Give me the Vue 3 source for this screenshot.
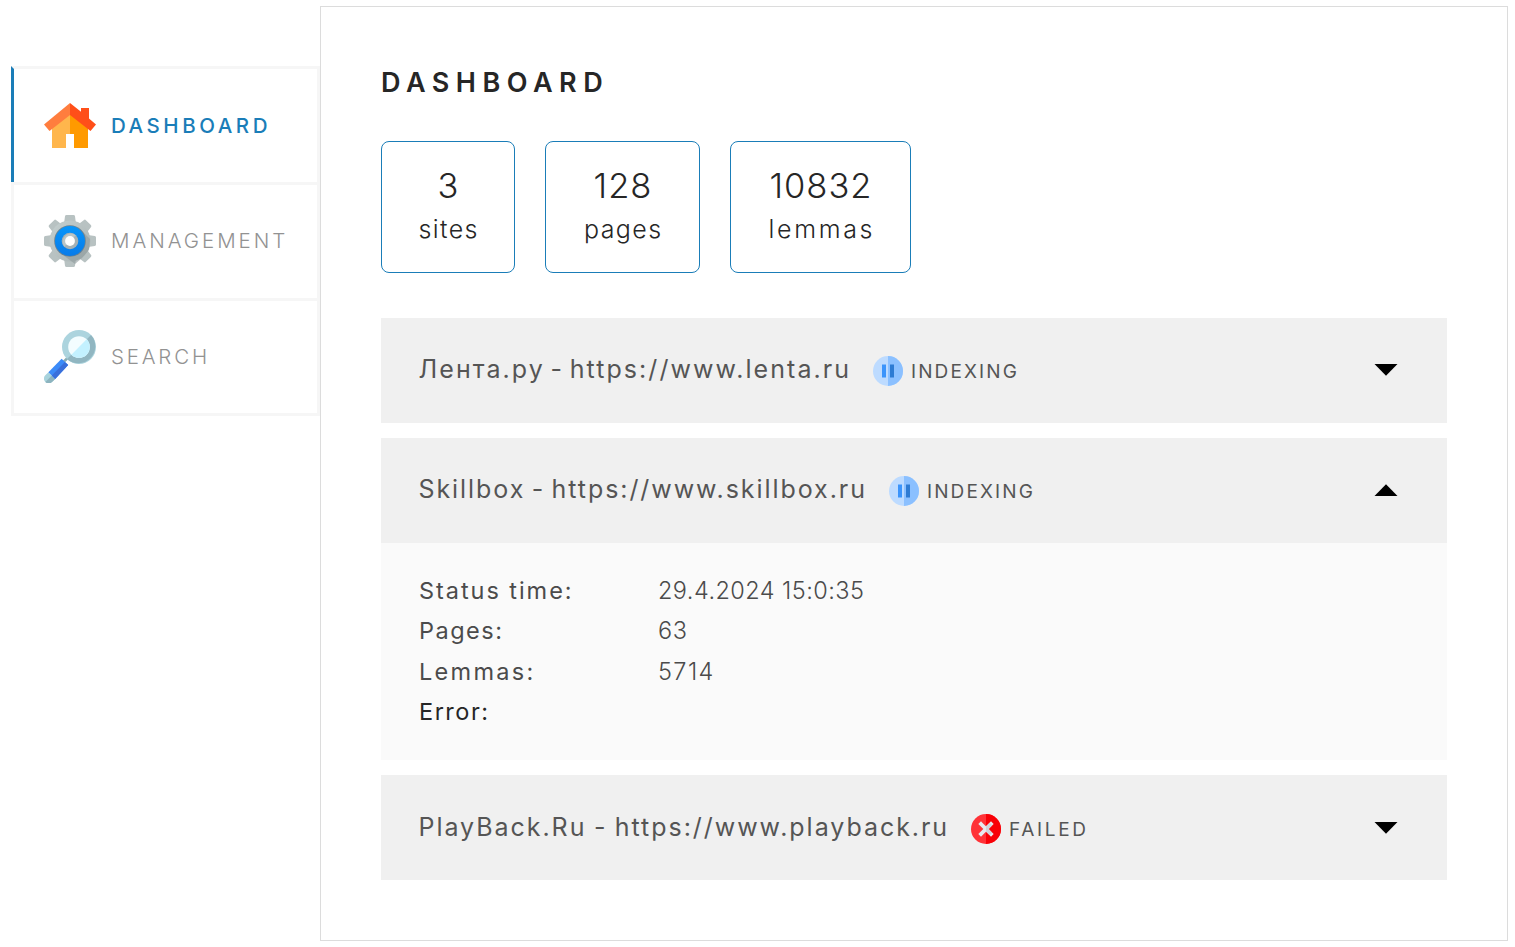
<script setup>
const menu = [
  { id: 'home', label: 'DASHBOARD', active: true },
  { id: 'gear', label: 'MANAGEMENT' },
  { id: 'search', label: 'SEARCH' },
]

const stats = [
  { id: 'sites', value: '3' },
  { id: 'pages', value: '128' },
  { id: 'lemmas', value: '10832' },
]

const sites = [
  { id: 'lenta', title: 'Лента.ру - https://www.lenta.ru', status: 'INDEXING' },
  {
    id: 'skillbox',
    title: 'Skillbox - https://www.skillbox.ru',
    status: 'INDEXING',
    open: true,
    details: [
      { id: 'time', name: 'Status time:', value: '29.4.2024 15:0:35' },
      { id: 'pagecount', name: 'Pages:', value: '63' },
      { id: 'lemmacount', name: 'Lemmas:', value: '5714' },
      { id: 'error', name: 'Error:', value: '' },
    ],
  },
  { id: 'playback', title: 'PlayBack.Ru - https://www.playback.ru', status: 'FAILED' },
]

const teeth = [0, 45, 90, 135, 180, 225, 270, 315]
</script>

<template>
  <div class="page">
    <nav class="sidebar">
      <a v-for="m in menu" :key="m.id" class="item" :class="{ active: m.active }">
        <svg v-if="m.id === 'home'" class="icon" viewBox="0 0 52 52">
          <path d="M8 26 26 11V49H8Z" fill="#ffb64c" />
          <path d="M26 11 44 26V49H26Z" fill="#ff9a00" />
          <path d="M22 35H30V50H22Z" fill="#fff" />
          <path d="M26 4 0 25.500 5.500 32 26 16Z" fill="#ff7d3e" />
          <path d="M26 4 37 12.800V9H45V19.500L52 25.500 46.500 32 26 16Z" fill="#ff4f19" />
        </svg>
        <svg v-else-if="m.id === 'gear'" class="icon" viewBox="0 0 52 52">
          <defs>
            <linearGradient id="metal" x1="0" y1="0" x2="1" y2="1">
              <stop offset="0" stop-color="#c5d0d0" />
              <stop offset=".5" stop-color="#b7c1c1" />
              <stop offset="1" stop-color="#a8b3b3" />
            </linearGradient>
            <linearGradient id="ring" x1="0" y1="0" x2="0" y2="1">
              <stop offset="0" stop-color="#0795fa" />
              <stop offset="1" stop-color="#087be9" />
            </linearGradient>
          </defs>
          <g fill="#b8c2c2">
            <path
              v-for="t in teeth"
              :key="t"
              d="M17 9.500 20.300 6.500 21 1.200Q21.200 0 22.500 0H29.500Q30.800 0 31 1.200L31.700 6.500 35 9.500Z"
              :transform="`rotate(${t} 26 26)`"
            />
          </g>
          <circle cx="26" cy="26" r="20.500" fill="url(#metal)" />
          <path d="M37 15 46 24 45 35 38 43 31 49 15 37Z" fill="#8f9b9d" opacity=".6" />
          <circle cx="26" cy="26" r="15.800" fill="#6c8290" />
          <circle cx="26" cy="26" r="15" fill="url(#ring)" />
          <circle cx="26" cy="26" r="8.300" fill="#a5b1b5" />
          <path d="M20.200 31.800A8.300 8.300 0 0 1 31.800 20.200Z" fill="#bac5c6" />
          <circle cx="26" cy="26" r="4.900" fill="#fff" />
        </svg>
        <svg v-else class="icon icon-search" viewBox="0 0 52 53">
          <path d="M25 26.500 19 32.500" stroke="#8badb4" stroke-width="2.500" />
          <path d="M4.400 42.200 1.300 45.300A4.600 4.600 0 0 0 8 52L11.200 49Z" fill="#a8d3dc" />
          <path d="M7.800 45.600 11.200 49 8 52A4.600 4.600 0 0 1 1.400 52Z" fill="#8db4bf" />
          <path d="M17.600 28.800 24.200 35 11.200 49 4.400 42.200Z" fill="#3c8bf8" />
          <path d="M20.900 31.900 24.200 35 11.200 49 7.800 45.600Z" fill="#3a6fda" />
          <circle cx="35" cy="17" r="17" fill="#acd4de" />
          <path d="M47 5A17 17 0 0 1 23 29Z" fill="#91b6c1" />
          <circle cx="35" cy="17" r="10.800" fill="#f3fdff" />
          <path d="M42.640 9.360A10.800 10.800 0 0 1 27.360 24.640Z" fill="#c3f1ff" />
        </svg>
        <span class="label" :class="`label-${m.id}`">{{ m.label }}</span>
      </a>
    </nav>

    <main class="content">
      <h1 class="heading">DASHBOARD</h1>

      <div class="stats">
        <div v-for="s in stats" :key="s.id" class="stat" :class="`stat-${s.id}`">
          <strong class="num">{{ s.value }}</strong>
          <span class="unit">{{ s.id }}</span>
        </div>
      </div>

      <section v-for="s in sites" :key="s.id" class="site">
        <header class="bar" :class="`bar-${s.id}`">
          <span class="title">{{ s.title }}</span>
          <svg v-if="s.status === 'FAILED'" class="badge" viewBox="0 0 30 30">
            <circle cx="15" cy="15" r="15" fill="#ff3237" />
            <path d="M15 0A15 15 0 0 1 15 30Z" fill="#f80007" />
            <path d="M10 10 20 20M20 10 10 20" stroke="#e8e9ee" stroke-width="3.800" stroke-linecap="square" />
            <path d="M15 12.300 18.700 8.700 21.300 11.300 17.700 15 21.300 18.700 18.700 21.300 15 17.700Z" fill="#d2d3da" />
          </svg>
          <svg v-else class="badge" viewBox="0 0 30 30">
            <circle cx="15" cy="15" r="15" fill="#bddbff" />
            <path d="M15 0A15 15 0 0 1 15 30Z" fill="#8bc0ff" />
            <path d="M9 8.500H13V21.500H9Z" fill="#3b94fb" />
            <path d="M17 8.500H21V21.500H17Z" fill="#2d7bd3" />
          </svg>
          <span class="status" :class="{ failed: s.status === 'FAILED' }">{{ s.status }}</span>
          <svg class="arrow" :class="{ up: s.open }" viewBox="0 0 24 12">
            <path d="M.5 0H23.500L12 11.800Z" fill="#000" />
          </svg>
        </header>
        <dl v-if="s.open" class="details">
          <div v-for="d in s.details" :key="d.id" class="line" :class="`line-${d.id}`">
            <dt class="name">{{ d.name }}</dt>
            <dd class="value">{{ d.value }}</dd>
          </div>
        </dl>
      </section>
    </main>
  </div>
</template>

<style>
body {
  background: #fff;
}
</style>

<style scoped>
.page {
  box-sizing: border-box;
  display: flex;
  align-items: flex-start;
  width: 1515px;
  height: 947px;
  padding: 6px 7px 6px 11px;
  overflow: hidden;
  font-family: Inter, "Open Sans", sans-serif;
  font-weight: 300;
  color: #262626;
  white-space: nowrap;
}
.sidebar {
  width: 309px;
  margin-top: 60px;
}
.item {
  box-sizing: border-box;
  display: flex;
  align-items: center;
  height: 118.500px;
  margin-bottom: -3px;
  padding-left: 30px;
  border: 3px solid #f6f6f6;
  color: #929292;
}
.item.active {
  height: 116px;
  margin-bottom: 0;
  padding-bottom: 1px;
  border-left-color: #1a7db8;
  border-bottom: 0;
  color: #1a7db8;
  font-weight: 500;
}
.icon {
  flex: none;
  width: 52px;
  height: 52px;
  margin-right: 15px;
}
.icon-search {
  height: 53px;
  margin-top: -1px;
}
.label {
  font-size: 20.500px;
  line-height: 26px;
}
.label-home {
  padding-top: 2px;
  letter-spacing: 3.550px;
}
.label-gear {
  letter-spacing: 2.950px;
}
.label-search {
  letter-spacing: 2.800px;
}
.content {
  box-sizing: border-box;
  width: 1188px;
  height: 935px;
  padding: 60px;
  border: 1px solid #dcdcdc;
}
.heading {
  margin: 0 0 42px;
  font-size: 27px;
  font-weight: 560;
  line-height: 32px;
  letter-spacing: 6.500px;
}
.stats {
  display: flex;
  gap: 30px;
  margin-bottom: 45px;
}
.stat {
  box-sizing: border-box;
  display: flex;
  flex-direction: column;
  align-items: center;
  height: 132px;
  padding-top: 22px;
  border: 1px solid #1a7db8;
  border-radius: 8px;
}
.stat-sites {
  width: 134px;
}
.stat-pages {
  width: 155px;
}
.stat-lemmas {
  width: 181px;
}
.num {
  margin-right: -1px;
  font-size: 34.500px;
  font-weight: 300;
  line-height: 44px;
  letter-spacing: 1px;
}
.unit {
  margin-right: -1.400px;
  font-size: 25px;
  line-height: 42px;
  letter-spacing: 1.400px;
}
.stat-lemmas .unit {
  margin-right: -2.700px;
  letter-spacing: 2.700px;
}
.site {
  margin-bottom: 15px;
}
.bar {
  box-sizing: border-box;
  display: flex;
  align-items: center;
  height: 105px;
  padding: 0 49px 0 37.500px;
  background: #f0f0f0;
  color: #555;
}
.bar-playback {
  padding-top: 2px;
}
.title {
  margin-top: -3px;
  font-size: 25px;
  font-weight: 400;
  line-height: 30px;
}
.bar-lenta .title {
  width: 454.500px;
  letter-spacing: 2.070px;
  word-spacing: -3.500px;
}
.bar-skillbox .title {
  width: 470.500px;
  letter-spacing: 1.930px;
  word-spacing: -2.500px;
}
.bar-playback .title {
  width: 552.500px;
  letter-spacing: 1.960px;
  word-spacing: -1.500px;
}
.badge {
  width: 30px;
  height: 30px;
  margin-right: 8px;
}
.status {
  padding-top: 1px;
  font-size: 19px;
  font-weight: 380;
  letter-spacing: 2.100px;
}
.status.failed {
  letter-spacing: 2.700px;
}
.arrow {
  width: 24px;
  height: 12px;
  margin-top: -1px;
  margin-left: auto;
}
.arrow.up {
  transform: rotate(180deg);
}
.details {
  box-sizing: border-box;
  height: 217px;
  margin: 0;
  padding: 28px 38px;
  background: #fafafa;
  color: #4b4b4b;
}
.line {
  display: flex;
  height: 40.300px;
  font-size: 23.500px;
  line-height: 40px;
}
.name {
  width: 239px;
  font-weight: 400;
}
.value {
  margin: 0;
}
.line-time .name {
  letter-spacing: 1.950px;
}
.line-time .value {
  letter-spacing: 0.450px;
}
.line-pagecount .name {
  letter-spacing: 1.500px;
}
.line-pagecount .value {
  letter-spacing: 0.500px;
}
.line-lemmacount .name {
  letter-spacing: 2.300px;
}
.line-lemmacount .value {
  letter-spacing: 1.400px;
}
.line-error {
  color: #262626;
}
.line-error .name {
  letter-spacing: 1.500px;
}
</style>
